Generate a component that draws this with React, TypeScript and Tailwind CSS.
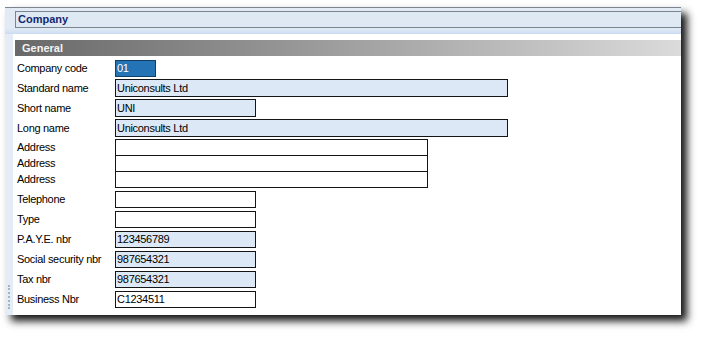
import React from "react";

type Field = {
  label: string;
  value?: string;
  width: number;
  tone: "blue" | "white" | "selected";
  height: number;
  mt: string;
};

const fields: Field[] = [
  { label: "Company code", value: "01", width: 41, tone: "selected", height: 17, mt: "mt-0" },
  { label: "Standard name", value: "Uniconsults Ltd", width: 393, tone: "blue", height: 18, mt: "mt-[2px]" },
  { label: "Short name", value: "UNI", width: 141, tone: "blue", height: 18, mt: "mt-[2px]" },
  { label: "Long name", value: "Uniconsults Ltd", width: 393, tone: "blue", height: 18, mt: "mt-[2px]" },
  { label: "Address", width: 313, tone: "white", height: 17, mt: "mt-[2px]" },
  { label: "Address", width: 313, tone: "white", height: 17, mt: "-mt-px" },
  { label: "Address", width: 313, tone: "white", height: 17, mt: "-mt-px" },
  { label: "Telephone", width: 141, tone: "white", height: 17, mt: "mt-[3px]" },
  { label: "Type", width: 141, tone: "white", height: 17, mt: "mt-[3px]" },
  { label: "P.A.Y.E. nbr", value: "123456789", width: 141, tone: "blue", height: 17, mt: "mt-[3px]" },
  { label: "Social security nbr", value: "987654321", width: 141, tone: "blue", height: 17, mt: "mt-[3px]" },
  { label: "Tax nbr", value: "987654321", width: 141, tone: "blue", height: 17, mt: "mt-[3px]" },
  { label: "Business Nbr", value: "C1234511", width: 141, tone: "white", height: 17, mt: "mt-[3px]" },
];

const toneClass = {
  blue: "bg-[#dce8f5] border-[#151515] text-black",
  white: "bg-white border-[#151515] text-black",
  selected: "bg-[#2473b5] border-[#123f66] text-white",
};

function FieldRow({ field }: { field: Field }) {
  return (
    <div className={`flex items-center ${field.mt}`} style={{ height: field.height }}>
      <div className="w-[102px] shrink-0 pl-[4px] text-black whitespace-nowrap">{field.label}</div>
      <div
        className={`h-full border flex items-center pl-[1px] ${toneClass[field.tone]}`}
        style={{ width: field.width }}
      >
        {field.value}
      </div>
    </div>
  );
}

export default function App() {
  return (
    <div
      className="w-[704px] h-[339px] bg-white pt-[7px] pl-[5px] overflow-hidden text-[11px] tracking-[-0.3px]"
      style={{ fontFamily: '"Liberation Sans", Arial, sans-serif' }}
    >
      <div className="w-[676px] h-[308px] bg-[#e2ebf5] border-t border-[#7b858f] flex flex-col shadow-[6px_6px_8px_rgba(0,0,0,0.92)]">
        {/* Title */}
        <div className="pt-[3px] pl-[10px]">
          <div className="h-[17px] border-y border-l border-[#7b858f] bg-[#dfe9f4] flex items-center pl-[2px] font-bold text-[#13286e] tracking-normal">
            Company
          </div>
        </div>
        <div className="h-[6px] bg-gradient-to-b from-[#e3ecf6] to-[#cbdcf1]" />

        {/* Body */}
        <div className="flex-1 flex">
          <div className="w-[8px] bg-[#e4ecf5] flex flex-col justify-end items-center pb-[6px]">
            <div className="h-[24px] border-l-2 border-dotted border-[#a9b3bd]" />
          </div>
          <div className="flex-1 bg-white pt-[6px]">
            <div className="ml-[2px] h-[16px] bg-gradient-to-r from-[#696969] to-[#dbdbdb] flex items-center pl-[7px] font-bold text-[#f4f4f4] tracking-normal">
              General
            </div>
            <div className="mt-[4px] flex flex-col">
              {fields.map((f, i) => (
                <FieldRow key={i} field={f} />
              ))}
            </div>
          </div>
        </div>
      </div>
    </div>
  );
}
